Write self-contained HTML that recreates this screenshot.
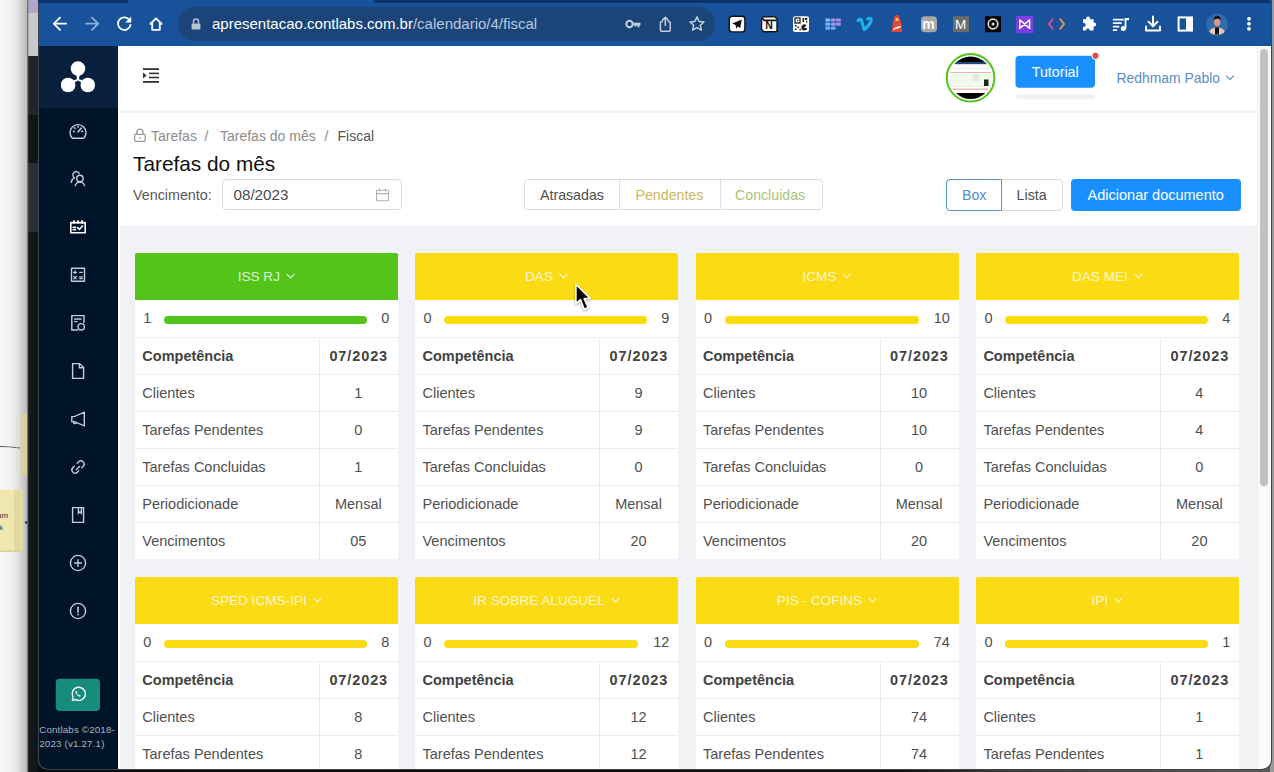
<!DOCTYPE html>
<html><head><meta charset="utf-8">
<style>
*{box-sizing:border-box;margin:0;padding:0}
html,body{width:1274px;height:772px;overflow:hidden;background:linear-gradient(90deg,#0b0b0b 0,#111 900px,#3a3a3a 1000px,#5a5a5a 1274px);font-family:"Liberation Sans",sans-serif}
#backdrop{position:absolute;left:0;top:0;width:38px;height:772px;background:linear-gradient(90deg,#f7f7f7 0,#f1f1f1 10px,#e2e2e2 18px,#cfcfcf 22px,#bdbdbd 26.5px,#7a7a7a 27.5px,#121a1e 28.5px,#0f161a 38px)}
#rback{position:absolute;left:1270px;top:0;width:4px;height:772px;background:#9a9a9a}
#win{position:absolute;left:38px;top:0;width:1233px;height:769px;border-radius:0 0 9px 9px;overflow:hidden;background:#fff}
#winborder{position:absolute;left:38px;top:0;width:1234px;height:770px;border-radius:0 0 10px 10px;border:1px solid #3c4450;border-top:none;pointer-events:none}
.a{position:absolute}
#toolbar{left:0;top:0;width:1233px;height:46px;background:#17529b}
#side{left:0;top:46px;width:80px;height:723px;background:#001429}
#logo{left:0;top:0;width:80px;height:62px;background:#08203e}
#content{left:80px;top:46px;width:1139px;height:723px;background:#f0f2f5;border-left:2px solid #fff}
#hdr{left:0;top:0;width:1137px;height:64px;background:#fff}
#phdr{left:0;top:67px;width:1137px;height:113px;background:#fff}
#sbar{left:1219px;top:46px;width:14px;height:723px;background:#fafafa;border-left:1px solid #eeeeee}
#thumb{left:2px;top:3px;width:8px;height:437px;border-radius:4px;background:#c1c1c1}
.bc{font-size:14px;color:#8c8c8c;white-space:nowrap;line-height:16px}
.seg{border:1px solid #dcdcdc;border-radius:4px;background:#fff}
.a div{line-height:16px}
.card{position:absolute;width:263px;height:306.5px;background:#fff;border-radius:2px 2px 0 0;overflow:hidden}
.card .h{position:absolute;left:0;top:0;width:263px;height:47px;text-align:center;line-height:47px;font-size:13.6px;color:rgba(255,255,255,.8);white-space:nowrap}
.card .h svg{display:inline-block;vertical-align:middle;margin-left:6px;margin-top:-2px}
.card.g .h{background:#52c41a}
.card.y .h{background:#fadb14}
.pr{position:absolute;left:0;top:47px;width:263px;height:38px;border-bottom:1px solid #ececec}
.pr span{position:absolute;top:10px;font-size:14.5px;color:#4e4e4e;line-height:16px}
.pl{left:8.5px}
.pn{right:8.6px}
.bar{position:absolute;left:29.2px;top:15.9px;height:8.3px;border-radius:4.2px}
.g .bar{background:#52c41a}
.y .bar{background:#fadb14}
.row{position:relative;height:37px;border-bottom:1px solid #ececec}
.card .row:nth-of-type(1){}
.row .k{position:absolute;left:7.5px;top:10.5px;font-size:14.5px;color:#505050;line-height:16px;white-space:nowrap}
.row .v{position:absolute;left:184px;width:79px;top:10.5px;text-align:center;font-size:14.5px;color:#505050;line-height:16px}
.row.b .k,.row.b .v{font-weight:bold;color:#424242}
.row.b .v{letter-spacing:.9px;padding-left:.9px}
.rows{position:absolute;left:0;top:85px;width:263px}
.vdiv{position:absolute;left:184px;top:85px;width:1px;height:222px;background:#ececec}
</style></head><body>
<div id="backdrop"></div>
<svg class="a" style="left:0;top:0" width="38" height="772" viewBox="0 0 38 772">
  <rect x="28" y="0" width="10" height="13" fill="#b3a6c9"/>
  <rect x="28" y="13" width="10" height="43" fill="#c9c9c9"/>
  <rect x="28" y="56" width="10" height="59" fill="#1f2528"/>
  <rect x="28" y="115" width="10" height="48" fill="#0f1519"/>
  <rect x="28" y="163" width="10" height="69" fill="#283036"/>
  <rect x="27.5" y="0" width="1" height="772" fill="#6b6b6b" opacity=".6"/>
  <path d="M0 446.5C8 446.5 14 447.2 20 448" fill="none" stroke="#555" stroke-width="1.2"/>
  <rect x="21" y="413.5" width="6" height="62" fill="#d9d2a0"/>
  <rect x="16.5" y="413.5" width="1" height="62" fill="#cfe8b8" opacity=".7"/>
  <rect x="0" y="490" width="22.5" height="62" fill="#f0e7ae"/>
  <rect x="14" y="490" width="8.5" height="62" fill="#e2d9a0"/>
  <rect x="0" y="550.5" width="22.5" height="1.5" fill="#d8cf98"/>
  <text x="-3" y="518" font-family="Liberation Sans" font-size="8" fill="#333">um</text>
  <text x="-1" y="530" font-family="Liberation Sans" font-size="8" fill="#333">k</text>
  <path d="M24.5 522.5L27 520.8V524.2Z" fill="#222"/>
</svg>
<div id="rback"></div>
<div id="win">
  <div id="toolbar" class="a"></div>
  <div id="side" class="a"><div id="logo" class="a"></div></div>
  <div id="content" class="a">
    <div id="hdr" class="a"></div>
    <div id="phdr" class="a"></div>
  </div>
  <div id="sbar" class="a"><div id="thumb" class="a"></div></div>
</div>
<!-- CARDS -->
<div id="cards" class="a" style="left:0;top:0;width:1274px;height:769px;overflow:hidden">
<div class="card g" style="left:134.8px;top:252.8px"><div class="h"><span>ISS RJ</span><svg width="9" height="6" viewBox="0 0 9 6"><path d="M0.6 0.8L4.5 4.9L8.4 0.8" fill="none" stroke="currentColor" stroke-width="1.1"/></svg></div><div class="pr"><span class="pl">1</span><div class="bar" style="right:30.7px"></div><span class="pn">0</span></div><div class="rows"><div class="row b"><span class="k">Competência</span><span class="v">07/2023</span></div><div class="row"><span class="k">Clientes</span><span class="v">1</span></div><div class="row"><span class="k">Tarefas Pendentes</span><span class="v">0</span></div><div class="row"><span class="k">Tarefas Concluidas</span><span class="v">1</span></div><div class="row"><span class="k">Periodicionade</span><span class="v">Mensal</span></div><div class="row"><span class="k">Vencimentos</span><span class="v">05</span></div></div><div class="vdiv"></div></div>
<div class="card y" style="left:415.0px;top:252.8px"><div class="h"><span>DAS</span><svg width="9" height="6" viewBox="0 0 9 6"><path d="M0.6 0.8L4.5 4.9L8.4 0.8" fill="none" stroke="currentColor" stroke-width="1.1"/></svg></div><div class="pr"><span class="pl">0</span><div class="bar" style="right:30.7px"></div><span class="pn">9</span></div><div class="rows"><div class="row b"><span class="k">Competência</span><span class="v">07/2023</span></div><div class="row"><span class="k">Clientes</span><span class="v">9</span></div><div class="row"><span class="k">Tarefas Pendentes</span><span class="v">9</span></div><div class="row"><span class="k">Tarefas Concluidas</span><span class="v">0</span></div><div class="row"><span class="k">Periodicionade</span><span class="v">Mensal</span></div><div class="row"><span class="k">Vencimentos</span><span class="v">20</span></div></div><div class="vdiv"></div></div>
<div class="card y" style="left:695.5px;top:252.8px"><div class="h"><span>ICMS</span><svg width="9" height="6" viewBox="0 0 9 6"><path d="M0.6 0.8L4.5 4.9L8.4 0.8" fill="none" stroke="currentColor" stroke-width="1.1"/></svg></div><div class="pr"><span class="pl">0</span><div class="bar" style="right:39.6px"></div><span class="pn">10</span></div><div class="rows"><div class="row b"><span class="k">Competência</span><span class="v">07/2023</span></div><div class="row"><span class="k">Clientes</span><span class="v">10</span></div><div class="row"><span class="k">Tarefas Pendentes</span><span class="v">10</span></div><div class="row"><span class="k">Tarefas Concluidas</span><span class="v">0</span></div><div class="row"><span class="k">Periodicionade</span><span class="v">Mensal</span></div><div class="row"><span class="k">Vencimentos</span><span class="v">20</span></div></div><div class="vdiv"></div></div>
<div class="card y" style="left:975.9px;top:252.8px"><div class="h"><span>DAS MEI</span><svg width="9" height="6" viewBox="0 0 9 6"><path d="M0.6 0.8L4.5 4.9L8.4 0.8" fill="none" stroke="currentColor" stroke-width="1.1"/></svg></div><div class="pr"><span class="pl">0</span><div class="bar" style="right:30.7px"></div><span class="pn">4</span></div><div class="rows"><div class="row b"><span class="k">Competência</span><span class="v">07/2023</span></div><div class="row"><span class="k">Clientes</span><span class="v">4</span></div><div class="row"><span class="k">Tarefas Pendentes</span><span class="v">4</span></div><div class="row"><span class="k">Tarefas Concluidas</span><span class="v">0</span></div><div class="row"><span class="k">Periodicionade</span><span class="v">Mensal</span></div><div class="row"><span class="k">Vencimentos</span><span class="v">20</span></div></div><div class="vdiv"></div></div>
<div class="card y" style="left:134.8px;top:576.8px"><div class="h"><span>SPED ICMS-IPI</span><svg width="9" height="6" viewBox="0 0 9 6"><path d="M0.6 0.8L4.5 4.9L8.4 0.8" fill="none" stroke="currentColor" stroke-width="1.1"/></svg></div><div class="pr"><span class="pl">0</span><div class="bar" style="right:30.7px"></div><span class="pn">8</span></div><div class="rows"><div class="row b"><span class="k">Competência</span><span class="v">07/2023</span></div><div class="row"><span class="k">Clientes</span><span class="v">8</span></div><div class="row"><span class="k">Tarefas Pendentes</span><span class="v">8</span></div><div class="row"><span class="k">Tarefas Concluidas</span><span class="v">0</span></div><div class="row"><span class="k">Periodicionade</span><span class="v">Mensal</span></div><div class="row"><span class="k">Vencimentos</span><span class="v">20</span></div></div><div class="vdiv"></div></div>
<div class="card y" style="left:415.0px;top:576.8px"><div class="h"><span>IR SOBRE ALUGUEL</span><svg width="9" height="6" viewBox="0 0 9 6"><path d="M0.6 0.8L4.5 4.9L8.4 0.8" fill="none" stroke="currentColor" stroke-width="1.1"/></svg></div><div class="pr"><span class="pl">0</span><div class="bar" style="right:39.6px"></div><span class="pn">12</span></div><div class="rows"><div class="row b"><span class="k">Competência</span><span class="v">07/2023</span></div><div class="row"><span class="k">Clientes</span><span class="v">12</span></div><div class="row"><span class="k">Tarefas Pendentes</span><span class="v">12</span></div><div class="row"><span class="k">Tarefas Concluidas</span><span class="v">0</span></div><div class="row"><span class="k">Periodicionade</span><span class="v">Mensal</span></div><div class="row"><span class="k">Vencimentos</span><span class="v">20</span></div></div><div class="vdiv"></div></div>
<div class="card y" style="left:695.5px;top:576.8px"><div class="h"><span>PIS - COFINS</span><svg width="9" height="6" viewBox="0 0 9 6"><path d="M0.6 0.8L4.5 4.9L8.4 0.8" fill="none" stroke="currentColor" stroke-width="1.1"/></svg></div><div class="pr"><span class="pl">0</span><div class="bar" style="right:39.6px"></div><span class="pn">74</span></div><div class="rows"><div class="row b"><span class="k">Competência</span><span class="v">07/2023</span></div><div class="row"><span class="k">Clientes</span><span class="v">74</span></div><div class="row"><span class="k">Tarefas Pendentes</span><span class="v">74</span></div><div class="row"><span class="k">Tarefas Concluidas</span><span class="v">0</span></div><div class="row"><span class="k">Periodicionade</span><span class="v">Mensal</span></div><div class="row"><span class="k">Vencimentos</span><span class="v">20</span></div></div><div class="vdiv"></div></div>
<div class="card y" style="left:975.9px;top:576.8px"><div class="h"><span>IPI</span><svg width="9" height="6" viewBox="0 0 9 6"><path d="M0.6 0.8L4.5 4.9L8.4 0.8" fill="none" stroke="currentColor" stroke-width="1.1"/></svg></div><div class="pr"><span class="pl">0</span><div class="bar" style="right:30.7px"></div><span class="pn">1</span></div><div class="rows"><div class="row b"><span class="k">Competência</span><span class="v">07/2023</span></div><div class="row"><span class="k">Clientes</span><span class="v">1</span></div><div class="row"><span class="k">Tarefas Pendentes</span><span class="v">1</span></div><div class="row"><span class="k">Tarefas Concluidas</span><span class="v">0</span></div><div class="row"><span class="k">Periodicionade</span><span class="v">Mensal</span></div><div class="row"><span class="k">Vencimentos</span><span class="v">20</span></div></div><div class="vdiv"></div></div>
</div>
<!-- /CARDS -->
<!-- CURSOR -->
<svg class="a" style="left:560px;top:270px" width="50" height="50" viewBox="560 270 50 50">
  <path d="M575.9 284.2V303.6L580.4 299.6L584.2 309.2L588.2 307.6L584.2 298.6H590.4Z" fill="#000" stroke="#fff" stroke-width="1.6" stroke-linejoin="round" style="filter:drop-shadow(0.5px 1px 0.8px rgba(0,0,0,.35))"/>
</svg>
<div id="winborder"></div>
<!-- TOOLBAR SVG (page coords) -->
<svg class="a" style="left:0;top:0" width="1274" height="46" viewBox="0 0 1274 46">
  <path d="M38 0H128V1A2 2 0 0 1 126 3H38Z" fill="#0d3468"/>
  <path d="M374 0H1270V3H376A2 2 0 0 1 374 1Z" fill="#0d3468"/>
  <rect x="178" y="7" width="537" height="34" rx="17" fill="#1b4578"/>
  <g fill="none" stroke="#fff" stroke-width="1.8" stroke-linecap="round" stroke-linejoin="round">
    <path d="M66.2 23.7H54 M60 17.6L53.8 23.7L60 29.8"/>
    <path d="M86 23.7H98.2 M92 17.6L98.2 23.7L92 29.8" stroke="#8cb0df"/>
    <path d="M129.6 20.2A6.3 6.3 0 1 0 130.5 25"/>
    <path d="M150.3 23.8L156 18.4L161.7 23.8 M152.2 22.3V29.8H159.8V22.3"/>
  </g>
  <path d="M131.2 16.6V22.6H125.2Z" fill="#fff"/>
  <g fill="#b9c2cf"><rect x="191.6" y="23.4" width="8.8" height="6.2" rx="1"/></g>
  <path d="M193.5 23.6V21.6A2.5 2.5 0 0 1 198.5 21.6V23.6" fill="none" stroke="#b9c2cf" stroke-width="1.5"/>
  <text x="212" y="28.8" font-family="Liberation Sans" font-size="15" fill="#fff">apresentacao.contlabs.com.br<tspan fill="#b8c8e0">/calendario/4/fiscal</tspan></text>
  <!-- key -->
  <g fill="none" stroke="#c3cede" stroke-width="2"><circle cx="629.5" cy="24" r="3.2"/></g>
  <path d="M632.7 22.8H640.5V25.2H639.5V27.3H637.6V25.2H636.4V26.6H634.6V25.2H632.7Z" fill="#c3cede"/>
  <!-- share -->
  <g fill="none" stroke="#c3cede" stroke-width="1.5" stroke-linecap="round" stroke-linejoin="round">
    <path d="M662.4 21.4H661.6A1.2 1.2 0 0 0 660.4 22.6V30A1.2 1.2 0 0 0 661.6 31.2H669A1.2 1.2 0 0 0 670.2 30V22.6A1.2 1.2 0 0 0 669 21.4H668.2 M665.3 25.6V17.4 M662.6 19.9L665.3 17.2L668 19.9"/>
    <path d="M697 16.9L699.1 21.5L704 22L700.3 25.3L701.4 30.2L697 27.6L692.6 30.2L693.7 25.3L690 22L694.9 21.5Z"/>
  </g>

  <!-- extension icons -->
  <rect x="729.3" y="16.3" width="15.6" height="15.6" rx="3" fill="#fff" stroke="#111" stroke-width="1.4"/>
  <path d="M741.8 19.6L732.2 23.6L735.6 25L736.2 28.8L737.8 26.4L740.2 28Z" fill="#111"/>
  <path d="M761.6 18.8L763.5 16.6L775.2 16.9L777 19V31.6L763.8 31.8L761.6 29.5Z" fill="#fff" stroke="#111" stroke-width="1.4"/>
  <path d="M762.3 18.3L764.2 20.4H776.5" fill="none" stroke="#111" stroke-width="1.6"/>
  <text x="765.2" y="29.4" font-family="Liberation Sans" font-weight="bold" font-size="10.5" fill="#111">N</text>
  <rect x="793" y="16.2" width="16" height="15.8" rx="2" fill="#fff"/>
  <g fill="#222">
    <rect x="795" y="18" width="5" height="5" fill="none" stroke="#222" stroke-width="1.3"/><rect x="796.8" y="19.8" width="1.4" height="1.4"/>
    <rect x="802.5" y="18" width="1.6" height="4"/><rect x="805" y="18" width="2.2" height="2"/><rect x="806" y="21" width="1.3" height="1.6"/>
    <rect x="795" y="25" width="1.6" height="1.6"/><rect x="797.5" y="26.5" width="1.6" height="1.6"/><rect x="795" y="28.4" width="1.6" height="1.6"/><rect x="799.4" y="28.8" width="1.6" height="1.4"/>
    <path d="M806.5 25.2A3.1 3.1 0 1 0 807.3 28.4L804.2 27.4Z"/>
  </g>
  <g>
    <rect x="825.3" y="18.4" width="4.9" height="3.2" rx=".7" fill="#84bdf6"/><rect x="831" y="18.4" width="4.5" height="3.2" rx=".7" fill="#a88de8"/><rect x="835.9" y="18.4" width="4.9" height="3.2" rx=".7" fill="#b08ae2"/>
    <rect x="825.3" y="22.6" width="4.9" height="3.2" rx=".7" fill="#6fb2f4"/><rect x="831" y="22.6" width="4.5" height="3.2" rx=".7" fill="#8aa6ec"/><rect x="835.9" y="22.6" width="4.9" height="3.2" rx=".7" fill="#a98ce4"/>
    <rect x="825.3" y="26.5" width="4.9" height="3.2" rx=".7" fill="#62aef6"/><rect x="831" y="26.5" width="4.5" height="3.2" rx=".7" fill="#7aa4ee"/>
  </g>
  <path d="M858 20.4Q860.4 18.2 861.4 20.6L864.2 29.4Q871 24.2 871.2 19.6Q870.6 17.4 867.6 18.8" fill="none" stroke="#1fb0ee" stroke-width="3.1" stroke-linecap="round" stroke-linejoin="round"/>
  <g>
    <path d="M893.2 19.8H900.8L902.2 32H891.6Z" fill="#e3463a"/>
    <path d="M894.2 17.8A2.8 2.8 0 0 1 899.8 17.8V20H894.2Z" fill="#e3463a"/>
    <circle cx="897" cy="19.6" r="1.6" fill="#f6e04a"/>
    <path d="M893.4 28.2L900.8 25.4V27.4L893.2 30Z" fill="#fff2e0"/>
  </g>
  <rect x="921" y="16.2" width="16" height="16" rx="4" fill="#a9a9a9"/>
  <text x="922.2" y="29.2" font-family="Liberation Sans" font-weight="bold" font-size="14" fill="#fff">m</text>
  <rect x="953" y="16.2" width="16" height="16" fill="#6b6b6b"/>
  <text x="955" y="29.3" font-family="Liberation Sans" font-size="13.5" fill="#fff">M</text>
  <rect x="985" y="16.2" width="16" height="16" fill="#000"/>
  <circle cx="993" cy="24" r="4.8" fill="none" stroke="#ddd" stroke-width="1.7"/><circle cx="993" cy="24" r="1.5" fill="#ddd"/>
  <rect x="1016" y="15.8" width="17.4" height="17.4" fill="#7b3ee6"/>
  <path d="M1019.8 19.8V28.4L1029.6 19.8V28.4Z" fill="none" stroke="#fff" stroke-width="1.5" stroke-linejoin="round"/>
  <path d="M1053.2 18.6L1049 24L1053.2 29.4" fill="none" stroke="#d6508a" stroke-width="2"/>
  <path d="M1059.8 18.6L1064 24L1059.8 29.4" fill="none" stroke="#d79856" stroke-width="2"/>
  <path d="M1083 19.3H1086.2V18.5A1.9 1.9 0 0 1 1090 18.5V19.3H1093.6V22.6H1094.2A1.9 1.9 0 0 1 1094.2 26.4H1093.6V30.6H1089.6V29.8A1.8 1.8 0 0 0 1086.2 29.8V30.6H1083V26.8H1083.8A1.9 1.9 0 0 0 1083.8 23H1083Z" fill="#fff"/>
  <g fill="#fff"><rect x="1112.8" y="18.8" width="11" height="1.8" rx=".5"/><rect x="1112.8" y="22.3" width="9" height="1.8" rx=".5"/><rect x="1112.8" y="25.8" width="6.6" height="1.8" rx=".5"/><rect x="1112.8" y="29.3" width="4.4" height="1.8" rx=".5"/>
  <circle cx="1123.3" cy="28.6" r="2.5"/><rect x="1124.6" y="18" width="1.8" height="10.5"/><path d="M1124.6 18H1129V20.2H1126.4Z"/></g>
  <g fill="none" stroke="#fff" stroke-width="2" stroke-linecap="round" stroke-linejoin="round">
    <path d="M1153 16.4V26 M1148.6 21.8L1153 26.2L1157.4 21.8 M1146 26.6V30.6H1160V26.6"/>
  </g>
  <rect x="1178.6" y="17.4" width="13.4" height="13.2" fill="none" stroke="#fff" stroke-width="2"/>
  <rect x="1186" y="17.4" width="6" height="13.2" fill="#fff"/>
  <circle cx="1217" cy="24.2" r="10.8" fill="#2e6bb0"/>
  <path d="M1209.2 31.8C1210.5 28.6 1213 27.6 1217 27.6C1221 27.6 1223.6 28.6 1224.8 31.8A10.8 10.8 0 0 1 1209.2 31.8Z" fill="#e6c9b0"/>
  <rect x="1215" y="27.4" width="4" height="7.2" fill="#111"/>
  <ellipse cx="1217.2" cy="22" rx="3.2" ry="4.4" fill="#d99a82"/>
  <path d="M1213.8 20.6C1213.6 16.8 1216 15.8 1217.4 15.8C1219.6 15.8 1221 17.4 1220.6 20.8C1219.8 18.6 1218 18.6 1217 18.8C1215.6 19 1214.4 19.4 1213.8 20.6Z" fill="#111"/>
  <g fill="#fff"><circle cx="1249" cy="18.8" r="1.9"/><circle cx="1249" cy="23.8" r="1.9"/><circle cx="1249" cy="28.8" r="1.9"/></g>
</svg>

<!-- SIDEBAR SVG -->
<svg class="a" style="left:38px;top:46px" width="80" height="723" viewBox="38 46 80 723">
  <g fill="#fff">
    <circle cx="78" cy="68.6" r="7.3"/><circle cx="68.1" cy="85" r="7.3"/><circle cx="87.8" cy="85" r="7.3"/>
    <path d="M76.2 74L79.8 74L79 79.2L82.5 80.2L81.6 82.4L78 80.6L74.4 82.4L73.5 80.2L77 79.2Z"/>
  </g>
  <g fill="none" stroke="#c5ccd6" stroke-width="1.4" stroke-linecap="round" stroke-linejoin="round">
    <path d="M72.3 138.2A8 8 0 1 1 83.7 138.2Z"/>
    <path d="M78 132L81.4 128" stroke-width="1.6"/>
    <path d="M73.4 131.5H74.4 M81.6 131.5H82.6 M74.6 127.8L75.2 128.4 M78 126.2V127.2"/>
    <path d="M79.3 173.4A3.4 3.4 0 1 0 74.4 177.8A5.3 5.3 0 0 0 71.4 182.4"/>
    <circle cx="79.9" cy="178.4" r="3.2"/>
    <path d="M75.2 185.6A4.9 4.9 0 0 1 84.6 185.6"/>
  </g>
  <g fill="none" stroke="#fff" stroke-width="1.6" stroke-linecap="round">
    <rect x="70.8" y="222.6" width="14.4" height="10.2" rx=".4" stroke-linecap="butt"/>
    <path d="M74 220.8V223.2 M78 220.8V223.2 M82 220.8V223.2 M73.2 227.2H75.6 M73.2 229.6H75.6 M77.6 227.6L79.4 229.4L82.6 226"/>
  </g>
  <g fill="none" stroke="#c5ccd6" stroke-width="1.4" stroke-linecap="round">
    <rect x="71.5" y="268.3" width="13" height="13" rx=".4"/>
    <path d="M73.6 272.3H76.4 M75 270.9V273.7 M79.6 272.3H82.4 M73.8 276.5L76.2 278.9 M76.2 276.5L73.8 278.9 M79.6 276.8H82.4 M79.6 278.6H82.4" stroke-width="1.2"/>
    <path d="M77.4 330H71.8V315.6H84V322.4"/>
    <path d="M74.6 319H81 M74.6 321.6H77"/>
    <circle cx="81.2" cy="326.8" r="3.2"/>
    <path d="M72.6 363.6H79.6L83.6 367.6V378.4H72.6Z M79.4 363.8V367.8H83.4"/>
    <path d="M71.8 416.6H74.2L84.3 412.2V425.8L74.2 421.6H71.8Z M73.6 421.8A1.5 1.5 0 0 0 76.6 422.4"/>
    <path d="M74.18 466.3L72.77 467.71A3.2 3.2 0 0 0 77.29 472.23L78.7 470.82 M81.82 467.7L83.23 466.29A3.2 3.2 0 0 0 78.71 461.77L77.3 463.18 M76.4 469.6L79.6 466.4"/>
    <path d="M72.6 507.6H83.6V522.4H72.6Z M78.4 507.8V513.2L79.9 512L81.4 513.2V507.8"/>
    <circle cx="78" cy="563" r="7.6"/>
    <path d="M78 559.6V566.4 M74.6 563H81.4"/>
    <circle cx="78" cy="611" r="7.6"/>
    <path d="M78 607.2V612.2" stroke-width="1.6"/>
  </g>
  <circle cx="78" cy="614.6" r="0.95" fill="#c5ccd6"/>
  <rect x="55.8" y="678.7" width="44.2" height="32.3" rx="4" fill="#178b7c"/>
  <g fill="none" stroke="#fff" stroke-width="1.3">
    <path d="M72.3 700.6L73.2 697.4A6.6 6.6 0 1 1 75.7 699.7Z" stroke-linejoin="round"/>
  </g>
  <path d="M75.4 691.2C75.2 692.8 76.8 695.8 79.8 696.8L80.8 695.8L79.6 694.8L78.8 695.2C78 694.8 77.2 694 76.8 693.2L77.2 692.4L76.4 691Z" fill="#fff"/>
  <text x="39.2" y="733.2" font-family="Liberation Sans" font-size="9.8" fill="#aab3bf" textLength="75.6" lengthAdjust="spacing">Contlabs ©2018-</text>
  <text x="39.2" y="746.6" font-family="Liberation Sans" font-size="9.8" fill="#aab3bf" textLength="65.2" lengthAdjust="spacing">2023 (v1.27.1)</text>
</svg>

<!-- HEADER -->
<svg class="a" style="left:120px;top:46px" width="1136" height="64" viewBox="120 46 1136 64">
  <g fill="#333">
    <rect x="143" y="68.2" width="16" height="1.8"/>
    <rect x="149" y="72.6" width="10" height="1.6"/>
    <rect x="149" y="76.7" width="10" height="1.6"/>
    <rect x="143" y="81" width="16" height="1.8"/>
    <path d="M143 72.6L146.6 75.5L143 78.4Z"/>
  </g>
  <circle cx="970.6" cy="77.8" r="23.8" fill="#fff" stroke="#52c41a" stroke-width="2"/>
  <clipPath id="av"><circle cx="970.6" cy="77.8" r="21.2"/></clipPath>
  <g clip-path="url(#av)">
    <rect x="948" y="55" width="46" height="46" fill="#fff"/>
    <rect x="948" y="55" width="46" height="8.5" fill="#000"/>
    <rect x="948" y="62" width="46" height="2.2" fill="#23487a"/>
    <rect x="948" y="93" width="46" height="9" fill="#000"/>
    <rect x="950" y="68" width="42" height=".8" fill="#e8e8e8"/>
    <rect x="950" y="72" width="42" height="1" fill="#f3b0b0"/>
    <rect x="950" y="74" width="42" height="10" fill="#f0f9ea"/>
    <rect x="973" y="74" width="6" height="7" fill="#dcefd2"/>
    <rect x="950" y="85.5" width="42" height=".8" fill="#cfe6bf"/>
    <rect x="950" y="88.6" width="42" height="1.2" fill="#f2a6a6"/>
    <rect x="984" y="79.5" width="4.5" height="6.5" fill="#222"/>
  </g>
  <rect x="1015.5" y="55.8" width="79.5" height="32" rx="4" fill="#1890ff"/>
  <text x="1055.2" y="77" text-anchor="middle" font-family="Liberation Sans" font-size="14.2" fill="#fff">Tutorial</text>
  <circle cx="1095.5" cy="55.8" r="3.6" fill="#e5463f" stroke="#fff" stroke-width="1"/>
  <rect x="1016" y="94.2" width="79" height="5" rx="2.5" fill="#eef0f3"/>
  <text x="1116.5" y="83" font-family="Liberation Sans" font-size="13.9" fill="#5a8dc8">Redhmam Pablo</text>
  <path d="M1226.3 75.6L1230.1 79.4L1233.9 75.6" fill="none" stroke="#5287c4" stroke-width="1.1"/>
</svg>

<!-- PAGE HEADER -->
<div class="a" style="left:0;top:0;width:1274px;height:772px;pointer-events:none">
  <svg class="a" style="left:133px;top:128px" width="14" height="15" viewBox="133 128 14 15">
    <g fill="none" stroke="#9a9a9a" stroke-width="1.3">
      <rect x="134.6" y="134.4" width="10.6" height="7" rx=".8"/>
      <path d="M136.8 134.2V132.2A3.1 3.1 0 0 1 143 132.2V134.2"/>
    </g>
    <circle cx="139.9" cy="138" r=".9" fill="#9a9a9a"/>
  </svg>
  <div class="a bc" style="left:151px;top:127.8px">Tarefas</div>
  <div class="a bc" style="left:204.5px;top:127.8px">/</div>
  <div class="a bc" style="left:220px;top:127.8px">Tarefas do mês</div>
  <div class="a bc" style="left:324.5px;top:127.8px">/</div>
  <div class="a bc" style="left:337.5px;top:127.8px;color:#555">Fiscal</div>
  <div class="a" style="left:133px;top:155.5px;font-size:20.8px;color:#111;white-space:nowrap">Tarefas do mês</div>
  <div class="a" style="left:133px;top:187.3px;font-size:14.3px;color:#585858;white-space:nowrap">Vencimento:</div>
  <div class="a" style="left:222px;top:179.4px;width:179.5px;height:31px;border:1px solid #d9d9d9;border-radius:4px;background:#fff"></div>
  <div class="a" style="left:233.5px;top:186.8px;font-size:15.2px;color:#4a4a4a;white-space:nowrap">08/2023</div>
  <svg class="a" style="left:374px;top:187px" width="17" height="16" viewBox="374 187 17 16">
    <g fill="none" stroke="#b0b0b0" stroke-width="1.1">
      <rect x="376.5" y="190.2" width="12" height="10.6" rx=".6"/>
      <path d="M376.5 193.6H388.5 M379.5 188.6V191.2 M385.5 188.6V191.2"/>
    </g>
  </svg>
  <div class="a seg" style="left:524.4px;top:179.3px;width:298.2px;height:31px"></div>
  <div class="a" style="left:619.4px;top:179.8px;width:1px;height:30px;background:#e0e0e0"></div>
  <div class="a" style="left:719.6px;top:179.8px;width:1px;height:30px;background:#e0e0e0"></div>
  <div class="a" style="left:540px;top:187px;font-size:14.2px;color:#4e4e4e;white-space:nowrap">Atrasadas</div>
  <div class="a" style="left:635.5px;top:187px;font-size:14.2px;color:#cdb75a;white-space:nowrap">Pendentes</div>
  <div class="a" style="left:735px;top:187px;font-size:14.2px;color:#a8c47a;white-space:nowrap">Concluidas</div>
  <div class="a" style="left:946px;top:179.2px;width:117px;height:31.4px;border:1px solid #d9d9d9;border-radius:4px;background:#fff"></div>
  <div class="a" style="left:946px;top:179.2px;width:56px;height:31.4px;border:1px solid #5b95d6;border-radius:4px 0 0 4px"></div>
  <div class="a" style="left:962px;top:187px;font-size:14.2px;color:#4c8ed4;white-space:nowrap">Box</div>
  <div class="a" style="left:1016.6px;top:187px;font-size:14.2px;color:#4e4e4e;white-space:nowrap">Lista</div>
  <div class="a" style="left:1071.3px;top:179.2px;width:169.7px;height:31.8px;border-radius:4px;background:#1890ff"></div>
  <div class="a" style="left:1087.6px;top:187px;font-size:14.5px;color:#fff;white-space:nowrap">Adicionar documento</div>
</div>
</body></html>
